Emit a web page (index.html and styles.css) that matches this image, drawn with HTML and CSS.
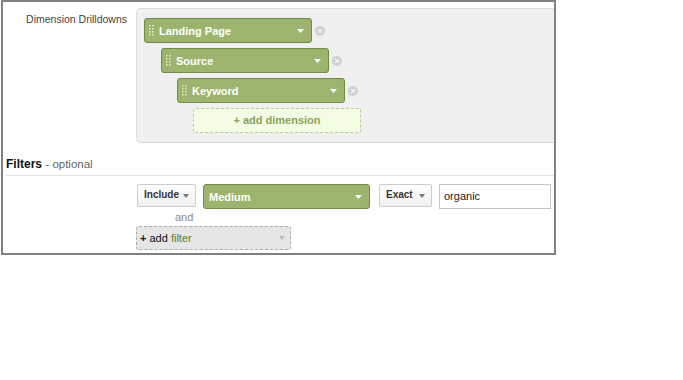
FILE: index.html
```html
<!DOCTYPE html>
<html lang="en">
<head>
    <meta charset="UTF-8">
    <meta name="viewport" content="width=device-width, initial-scale=1.0">
    <title>Dimension Drilldowns</title>
    <link rel="stylesheet" href="styles.css">
</head>
<body>
    <div class="frame">
        <div class="dim-row">
            <div class="dim-label">Dimension Drilldowns</div>
            <div class="dim-panel">
                <div class="pill-row level-0">
                    <div class="pill">
                        <svg class="grip" width="5" height="12" viewBox="0 0 5 12"><g fill="#e6eed8"><rect x="0" y="0" width="1.5" height="1.5"/><rect x="3" y="0" width="1.5" height="1.5"/><rect x="0" y="3" width="1.5" height="1.5"/><rect x="3" y="3" width="1.5" height="1.5"/><rect x="0" y="6" width="1.5" height="1.5"/><rect x="3" y="6" width="1.5" height="1.5"/><rect x="0" y="9" width="1.5" height="1.5"/><rect x="3" y="9" width="1.5" height="1.5"/></g></svg>
                        <span class="pill-text">Landing Page</span>
                        <svg class="arrow" width="7" height="4" viewBox="0 0 7 4"><path d="M0 0h7L3.5 4z" fill="#fff"/></svg>
                    </div>
                    <svg class="close" width="10" height="10" viewBox="0 0 10 10"><circle cx="5" cy="5" r="5" fill="#cfcfcf"/><path d="M3 3l4 4M7 3l-4 4" stroke="#f4f4f4" stroke-width="1.4"/></svg>
                </div>
                <div class="pill-row level-1">
                    <div class="pill">
                        <svg class="grip" width="5" height="12" viewBox="0 0 5 12"><g fill="#e6eed8"><rect x="0" y="0" width="1.5" height="1.5"/><rect x="3" y="0" width="1.5" height="1.5"/><rect x="0" y="3" width="1.5" height="1.5"/><rect x="3" y="3" width="1.5" height="1.5"/><rect x="0" y="6" width="1.5" height="1.5"/><rect x="3" y="6" width="1.5" height="1.5"/><rect x="0" y="9" width="1.5" height="1.5"/><rect x="3" y="9" width="1.5" height="1.5"/></g></svg>
                        <span class="pill-text">Source</span>
                        <svg class="arrow" width="7" height="4" viewBox="0 0 7 4"><path d="M0 0h7L3.5 4z" fill="#fff"/></svg>
                    </div>
                    <svg class="close" width="10" height="10" viewBox="0 0 10 10"><circle cx="5" cy="5" r="5" fill="#cfcfcf"/><path d="M3 3l4 4M7 3l-4 4" stroke="#f4f4f4" stroke-width="1.4"/></svg>
                </div>
                <div class="pill-row level-2">
                    <div class="pill">
                        <svg class="grip" width="5" height="12" viewBox="0 0 5 12"><g fill="#e6eed8"><rect x="0" y="0" width="1.5" height="1.5"/><rect x="3" y="0" width="1.5" height="1.5"/><rect x="0" y="3" width="1.5" height="1.5"/><rect x="3" y="3" width="1.5" height="1.5"/><rect x="0" y="6" width="1.5" height="1.5"/><rect x="3" y="6" width="1.5" height="1.5"/><rect x="0" y="9" width="1.5" height="1.5"/><rect x="3" y="9" width="1.5" height="1.5"/></g></svg>
                        <span class="pill-text">Keyword</span>
                        <svg class="arrow" width="7" height="4" viewBox="0 0 7 4"><path d="M0 0h7L3.5 4z" fill="#fff"/></svg>
                    </div>
                    <svg class="close" width="10" height="10" viewBox="0 0 10 10"><circle cx="5" cy="5" r="5" fill="#cfcfcf"/><path d="M3 3l4 4M7 3l-4 4" stroke="#f4f4f4" stroke-width="1.4"/></svg>
                </div>
                <div class="add-dim">+ add dimension</div>
            </div>
        </div>

        <h3 class="filters-title">Filters <span class="optional">- optional</span></h3>

        <div class="filter-block">
            <div class="filter-row">
                <div class="btn include-btn">Include <svg class="btn-arrow" width="6" height="4" viewBox="0 0 6 4"><path d="M0 0h6L3 4z" fill="#777"/></svg></div>
                <div class="pill medium-pill">
                    <span class="pill-text">Medium</span>
                    <svg class="arrow" width="7" height="4" viewBox="0 0 7 4"><path d="M0 0h7L3.5 4z" fill="#fff"/></svg>
                </div>
                <div class="btn exact-btn">Exact <svg class="btn-arrow" width="6" height="4" viewBox="0 0 6 4"><path d="M0 0h6L3 4z" fill="#777"/></svg></div>
                <div class="text-input">organic</div>
            </div>
            <div class="and-text">and</div>
            <div class="add-filter">
                <span><b>+</b> add <span class="green">filter</span></span>
                <svg width="6" height="4" viewBox="0 0 6 4"><path d="M0 0h6L3 4z" fill="#bbb"/></svg>
            </div>
        </div>
    </div>
</body>
</html>
```

FILE: styles.css
```css
body {
    margin: 0;
    font-family: "Liberation Sans", Arial, sans-serif;
    background-color: #fff;
}
.frame {
    margin-left: 1px;
    width: 551px;
    height: 251px;
    border: 2px solid #808080;
    background: #fff;
    overflow: hidden;
}
.dim-row {
    display: flex;
    margin-top: 6px;
}
.dim-label {
    width: 124px;
    padding-right: 9px;
    text-align: right;
    font-size: 10.5px;
    color: #444;
    padding-top: 5px;
}
.dim-panel {
    flex: 1;
    background: #f0f0f0;
    border: 1px solid #dcdcdc;
    border-right: none;
    border-bottom-color: #d4d4d4;
    border-radius: 5px 0 0 5px;
    padding: 9px 0 0 7px;
    box-sizing: border-box;
    height: 135px;
}
.pill-row {
    display: flex;
    align-items: center;
    margin-bottom: 5px;
}
.level-1 { margin-left: 17px; }
.level-2 { margin-left: 33px; }
.pill {
    display: flex;
    align-items: center;
    width: 168px;
    height: 25px;
    box-sizing: border-box;
    background: #9cb46e;
    border: 1px solid #718c47;
    border-radius: 3px;
    padding: 0 7px 0 4px;
    color: #fff;
    font-weight: bold;
    font-size: 11px;
}
.grip {
    margin-right: 5px;
    flex-shrink: 0;
}
.pill-text {
    flex: 1;
}
.close {
    margin-left: 3px;
}
.add-dim {
    margin-left: 49px;
    width: 168px;
    height: 25px;
    box-sizing: border-box;
    background: #f3fce4;
    border: 1px dashed #b7cc91;
    border-radius: 3px;
    color: #89a35c;
    font-weight: bold;
    font-size: 11px;
    text-align: center;
    line-height: 22px;
}
.filters-title {
    margin: 14px 0 0 3px;
    padding-bottom: 3px;
    font-size: 12px;
    line-height: 15px;
    color: #111;
    border-bottom: 1px solid #e2e2e2;
}
.optional {
    font-weight: normal;
    font-size: 11.5px;
    color: #666;
}
.filter-block {
    margin: 8px 0 0 133px;
}
.filter-row {
    display: flex;
    align-items: flex-start;
}
.btn {
    display: flex;
    align-items: center;
    justify-content: space-between;
    height: 23px;
    box-sizing: border-box;
    background: linear-gradient(#ffffff, #f1f1f1);
    border: 1px solid #cdcdcd;
    border-radius: 2px;
    font-size: 10px;
    font-weight: bold;
    color: #333;
    padding: 0 6px 2px 6px;
}
.include-btn {
    width: 59px;
    margin-left: 1px;
}
.btn-arrow {
    margin-top: 2px;
}
.medium-pill {
    width: 167px;
    margin-left: 7px;
    padding-left: 5px;
}
.exact-btn {
    width: 53px;
    margin-left: 9px;
}
.text-input {
    margin-left: 7px;
    width: 112px;
    height: 25px;
    box-sizing: border-box;
    border: 1px solid #c4c4c4;
    background: #fff;
    font-size: 11px;
    color: #222;
    padding-left: 4px;
    line-height: 22px;
}
.and-text {
    padding-left: 39px;
    font-size: 11px;
    line-height: 17px;
    color: #8c8c8c;
}
.add-filter {
    display: flex;
    align-items: center;
    justify-content: space-between;
    width: 155px;
    height: 24px;
    box-sizing: border-box;
    background: #e6e6e6;
    border: 1px dashed #ababab;
    border-radius: 3px;
    padding: 0 5px 0 3px;
    font-size: 11px;
    color: #111;
}
.green {
    color: #5c7b2c;
}
```
